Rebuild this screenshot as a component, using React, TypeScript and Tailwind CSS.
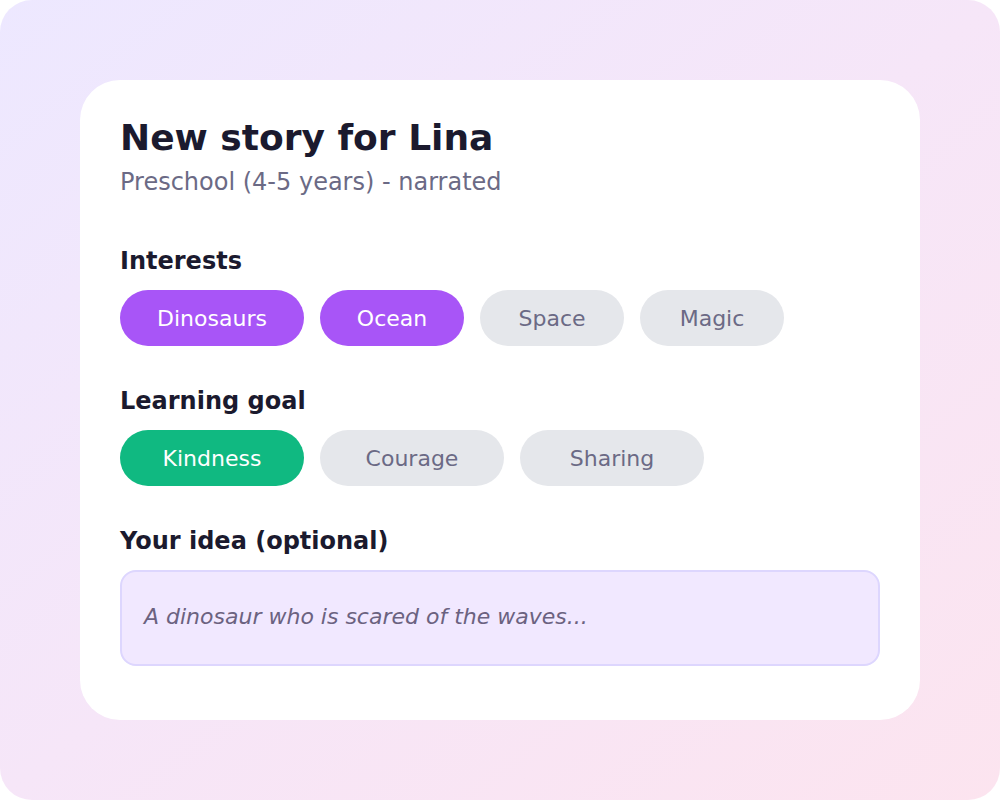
const interests = [
  { label: "Dinosaurs", active: true, w: "w-[184px]" },
  { label: "Ocean", active: true, w: "w-[144px]" },
  { label: "Space", active: false, w: "w-[144px]" },
  { label: "Magic", active: false, w: "w-[144px]" },
];

const goals = [
  { label: "Kindness", active: true },
  { label: "Courage", active: false },
  { label: "Sharing", active: false },
];

const font = { fontFamily: '"DejaVu Sans", Verdana, sans-serif' };

const Label = ({ children }: { children: string }) => (
  <h2 className="text-[24px] leading-[28px] font-bold text-[#1b1a2e]">{children}</h2>
);

export default function App() {
  return (
    <div className="w-[1000px] h-[800px] bg-white" style={font}>
      <div className="w-full h-full rounded-[32px] bg-gradient-to-br from-[#ede8ff] via-[#f6e6f8] to-[#fce4ef] flex items-center justify-center">
        <div className="w-[840px] h-[640px] bg-white rounded-[40px] px-10 pt-10">
          <h1 className="text-[36px] leading-[36px] font-bold text-[#1b1a2e]">New story for Lina</h1>
          <p className="mt-3 text-[24px] leading-[28px] text-[#6b6a85]">Preschool (4-5 years) - narrated</p>

          <div className="mt-[51px]">
            <Label>Interests</Label>
            <div className="mt-[15px] flex gap-4">
              {interests.map((c) => (
                <div
                  key={c.label}
                  className={`${c.w} h-14 rounded-full flex items-center justify-center text-[22px] ${
                    c.active ? "bg-[#a855f7] text-white" : "bg-[#e5e7eb] text-[#6b6a85]"
                  }`}
                >
                  {c.label}
                </div>
              ))}
            </div>
          </div>

          <div className="mt-[41px]">
            <Label>Learning goal</Label>
            <div className="mt-[15px] flex gap-4">
              {goals.map((c) => (
                <div
                  key={c.label}
                  className={`w-[184px] h-14 rounded-full flex items-center justify-center text-[22px] ${
                    c.active ? "bg-[#10b981] text-white" : "bg-[#e5e7eb] text-[#6b6a85]"
                  }`}
                >
                  {c.label}
                </div>
              ))}
            </div>
          </div>

          <div className="mt-[41px]">
            <Label>Your idea (optional)</Label>
            <div className="mt-[15px] h-24 rounded-2xl border-2 border-[#ddd6fe] bg-[#f1e8ff] px-[22px] flex items-center">
              <span className="italic text-[22px] leading-[28px] text-[#6b6280] -mt-[2px]">A dinosaur who is scared of the waves...</span>
            </div>
          </div>
        </div>
      </div>
    </div>
  );
}
